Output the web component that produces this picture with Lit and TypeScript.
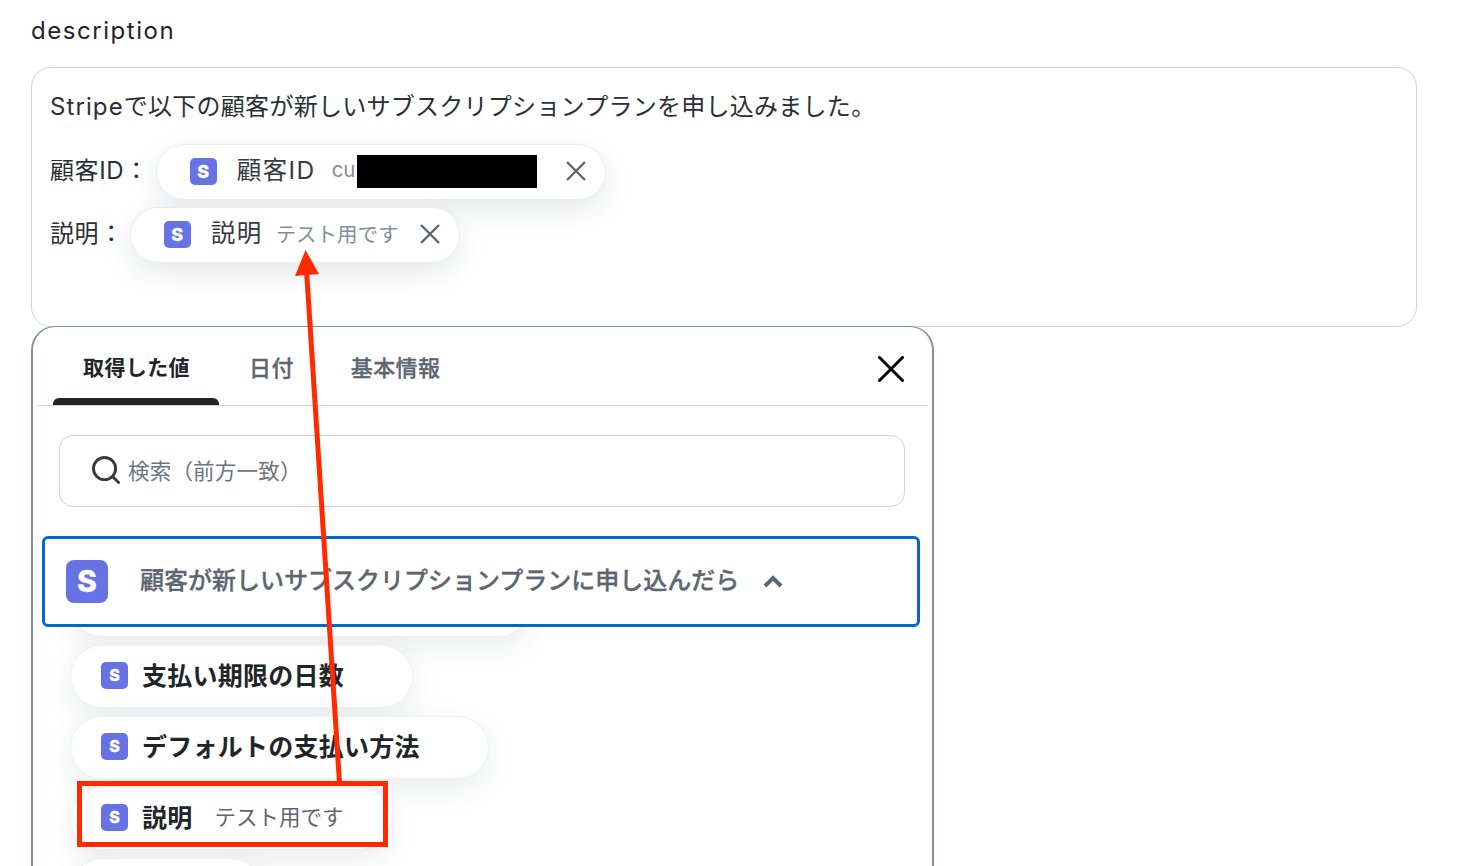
import { LitElement, html, css, svg } from "lit";
import { customElement } from "lit/decorators.js";

@customElement("app-root")
export class AppRoot extends LitElement {
  static styles = css`
    :host {
      display: block;
      position: relative;
      height: 866px;
      overflow: hidden;
      background: #fff;
      font-family: Inter, "Noto Sans CJK JP", sans-serif;
      color: #212529;
    }
    .page { padding: 14px 53px 0 31px; }
    .title { font-size: 24px; line-height: 34px; letter-spacing: 1.55px; margin-bottom: 19px; }
    .field {
      box-sizing: border-box;
      height: 260px;
      border: 1px solid #cfd4da;
      border-radius: 20px;
      padding: 22px 18px 0;
    }
    .line { font-size: 24px; line-height: 34px; letter-spacing: 0.27px; color: #2b3036; }
    .line .latin { letter-spacing: 1.1px; }
    .row { display: flex; align-items: center; gap: 7px; font-size: 24px; letter-spacing: 0.6px; color: #2b3036; margin-top: 7px; }
    .row.first { margin-top: 20px; }
    .row .lbl { padding-bottom: 8px; white-space: nowrap; }
    .chip {
      display: flex;
      align-items: center;
      box-sizing: border-box;
      height: 56px;
      padding: 0 18px 0 33px;
      border: 1px solid #e9ecef;
      border-radius: 28px;
      background: #fff;
      box-shadow: 0 10px 28px rgba(30, 40, 60, 0.1);
    }
    .row.second .chip { margin-left: -1px; }
    .logo {
      flex: none;
      box-sizing: border-box;
      width: 27px;
      height: 27px;
      border-radius: 5px;
      background: #6772e5;
      color: #fff;
      font: 800 16px/27px Inter, sans-serif;
      -webkit-text-stroke: 0.3px #fff;
      letter-spacing: 0;
      text-align: center;
    }
    .logo.big { width: 42px; height: 43px; border-radius: 8px; font-size: 30px; line-height: 43px; }
    .chip .logo { margin-top: -2px; font-size: 18px; }
    .chip .name { margin: -8px 0 0 20px; font-size: 24.5px; letter-spacing: 1.4px; color: #343a40; }
    .chip .val { margin: -5px 0 0 13px; font-size: 20.5px; letter-spacing: 0; color: #868e96; white-space: nowrap; }
    .chip .val.cu { margin-left: 16px; }
    .redact { width: 180px; height: 33px; margin: -2px 0 0 2px; background: #000; }
    .chip .x { margin: -2px 0 0 20px; flex: none; display: block; }
    .chip .redact + .x { margin-left: 28px; }
    .panel {
      box-sizing: border-box;
      width: 903px;
      height: 620px;
      margin-top: -1px;
      position: relative;
      background: #fff;
      border: 2px solid #868e96;
      border-width: 1px 2px 1px 2px;
      border-radius: 24px;
    }
    .tabs {
      display: flex;
      align-items: stretch;
      height: 78px;
      margin: 0 4px;
      padding-left: 16px;
      border-bottom: 1px solid #ced4da;
    }
    .tab {
      position: relative;
      padding: 0 27px 0 30px;
      font-size: 22px;
      letter-spacing: 0.4px;
      line-height: 82px;
      font-weight: 500;
      -webkit-text-stroke: 0.3px #5c6670;
      color: #5c6670;
    }
    .tab.on { padding-right: 29px; font-size: 21px; color: #212529; font-weight: 700; -webkit-text-stroke: 0; }
    .tab.on::after {
      content: "";
      position: absolute;
      left: 0;
      right: 0;
      bottom: 0;
      height: 7px;
      background: #212529;
      border-radius: 6px 6px 0 0;
    }
    .close { margin: 29px 24px 0 auto; display: block; }
    .search {
      display: flex;
      align-items: center;
      box-sizing: border-box;
      height: 72px;
      margin: 29px 27px 29px 26px;
      padding-left: 32px;
      gap: 8px;
      border: 1px solid #ced4da;
      border-radius: 14px;
      font-size: 21.5px;
      letter-spacing: 0.2px;
      color: #6c757d;
    }
    .search svg { margin-top: -3px; }
    .search span { margin-top: -4px; }
    .group {
      position: relative;
      z-index: 1;
      display: flex;
      align-items: center;
      box-sizing: border-box;
      height: 91px;
      margin: 0 12px 0 9px;
      padding-left: 21px;
      border: 3px solid #0b63ce;
      border-radius: 6px;
      background: #fff;
      font-size: 24px;
      font-weight: 500;
      color: #5c6670;
    }
    .group .logo { margin-top: -1px; }
    .group .txt { margin: -6px 0 0 32px; white-space: nowrap; -webkit-text-stroke: 0.3px #5c6670; }
    .group svg { margin-left: 24px; margin-top: 0; }
    .list {
      display: flex;
      flex-direction: column;
      align-items: flex-start;
      gap: 8px;
      margin-top: -53px;
      padding-left: 37px;
    }
    .item {
      display: flex;
      align-items: center;
      box-sizing: border-box;
      height: 63px;
      padding: 0 46px 0 30px;
      border: 1px solid #eef0f2;
      border-radius: 32px;
      background: #fff;
      box-shadow: 0 10px 30px rgba(30, 40, 60, 0.09);
    }
    .item .logo { margin-top: -2px; }
    .item .name { margin: -6px 22px 0 14px; font-size: 25px; letter-spacing: 0.25px; font-weight: 700; color: #212529; white-space: nowrap; }
    .item .val { margin-top: -6px; font-size: 21.5px; color: #5c6670; white-space: nowrap; }
    .item.wide { width: 460px; }
    .item.short { width: 192px; }
    .overlay { position: absolute; left: 0; top: 0; pointer-events: none; z-index: 5; }
  `;

  private logo(big = false) {
    return html`<span class="logo ${big ? "big" : ""}">S</span>`;
  }

  private chipX() {
    return html`<svg class="x" width="22" height="22" viewBox="0 0 22 22" fill="none" stroke="#5c6670" stroke-width="2.4">
      <path d="M2 2 L20 20 M20 2 L2 20" />
    </svg>`;
  }

  render() {
    return html`
      <div class="page">
        <div class="title">description</div>
        <div class="field">
          <div class="line"><span class="latin">Stripe</span>で以下の顧客が新しいサブスクリプションプランを申し込みました。</div>
          <div class="row first">
            <span class="lbl">顧客ID：</span>
            <div class="chip">
              ${this.logo()}<span class="name">顧客ID</span><span class="val cu">cu</span><span class="redact"></span>${this.chipX()}
            </div>
          </div>
          <div class="row second">
            <span class="lbl">説明：</span>
            <div class="chip">
              ${this.logo()}<span class="name">説明</span><span class="val">テスト用です</span>${this.chipX()}
            </div>
          </div>
        </div>
        <div class="panel">
          <div class="tabs">
            <div class="tab on">取得した値</div>
            <div class="tab">日付</div>
            <div class="tab">基本情報</div>
            <svg class="close" width="26" height="26" viewBox="0 0 26 26" fill="none" stroke="#000" stroke-width="3" stroke-linecap="round">
              <path d="M1.5 1.5 L24.5 24.5 M24.5 1.5 L1.5 24.5" />
            </svg>
          </div>
          <div class="search">
            <svg width="28" height="28" viewBox="0 0 29 29" fill="none" stroke="#343a40" stroke-width="3" stroke-linecap="round">
              <circle cx="13" cy="13" r="11.5" />
              <path d="M21.5 21.5 L27.5 27.5" />
            </svg>
            <span>検索（前方一致）</span>
          </div>
          <div class="group">
            ${this.logo(true)}
            <span class="txt">顧客が新しいサブスクリプションプランに申し込んだら</span>
            <svg width="20" height="13" viewBox="0 0 20 13" fill="none" stroke="#5c6670" stroke-width="4">
              <path d="M2 11 L10 3 L18 11" />
            </svg>
          </div>
          <div class="list">
            <div class="item wide"></div>
            <div class="item">${this.logo()}<span class="name">支払い期限の日数</span></div>
            <div class="item">${this.logo()}<span class="name">デフォルトの支払い方法</span></div>
            <div class="item">${this.logo()}<span class="name">説明</span><span class="val">テスト用です</span></div>
            <div class="item short"></div>
          </div>
        </div>
      </div>
      <svg class="overlay" width="1470" height="866" viewBox="0 0 1470 866" fill="none">
        ${svg`
          <rect x="79.5" y="783.5" width="306" height="61" stroke="#ff2a00" stroke-width="5" />
          <path d="M339.5 783 L306.5 270" stroke="#ff2a00" stroke-width="5" />
          <path d="M305.5 250 L295 276 L319 274 Z" fill="#ff2a00" />
        `}
      </svg>
    `;
  }
}
